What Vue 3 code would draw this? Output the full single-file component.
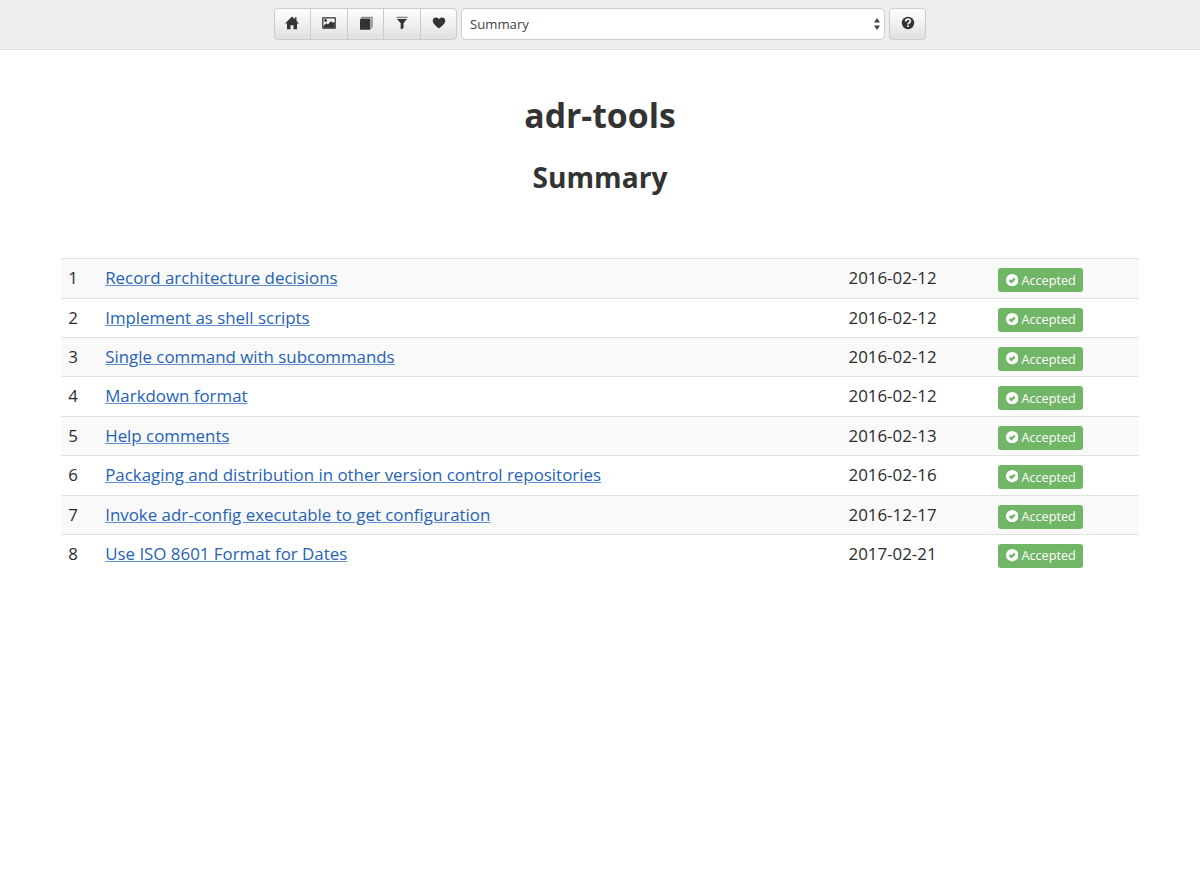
<template>
    <header class="toolbar">
        <div class="btn-group">
            <button v-for="item in buttons" :key="item.title" class="btn" type="button" :title="item.title">
                <svg class="icon" viewBox="0 0 14 14">
                    <path v-for="(shape, i) in item.shapes" :key="i" :d="shape.d" :opacity="shape.opacity" fill-rule="evenodd" />
                </svg>
            </button>
        </div>

        <button class="select" type="button">
            <span>{{ selected }}</span>
            <svg class="arrows" viewBox="0 0 6 12">
                <path d="M3 0 6 4.6H0zM3 12 0 7.4h6z" />
            </svg>
        </button>

        <button class="btn help" type="button" title="Help">
            <svg class="icon" viewBox="0 0 14 14">
                <circle cx="7" cy="7" r="6.2" />
                <path class="question" d="M4.7 5.5C4.7 2.4 9.4 2.5 9.4 5.1 9.4 6.8 7.1 6.8 7.1 8.4M7.1 9.3v1.8" />
            </svg>
        </button>
    </header>

    <main class="content">
        <h1>adr-tools</h1>
        <h2>Summary</h2>

        <div class="decisions">
            <div v-for="row in decisions" :key="row.id" class="row">
                <span>{{ row.id }}</span>
                <span><a href="#" @click.prevent>{{ row.title }}</a></span>
                <span>{{ row.date }}</span>
                <span class="badge">
                    <svg class="check" viewBox="0 0 12 12">
                        <circle cx="6" cy="6" r="6" />
                        <path d="M3.4 5.9 5.3 7.6 8.5 4.5" />
                    </svg>
                    Accepted
                </span>
            </div>
        </div>
    </main>
</template>

<script setup>
import { ref } from "vue";

const selected = ref("Summary");

const buttons = [
    { title: "Home", shapes: [{ d: "M7 .4 9.8 3.2V1.3h1.7v3.6L14 7.5h-2v5.8H8.5V9.2h-3v4.1H2V7.5H0z" }] },
    {
        title: "Diagrams",
        shapes: [
            { d: "M.2 1.2h13.6v11.6H.2zM1.4 2.4v9.2h11.2V2.4z" },
            { d: "M1.5 11.8V10l2.8-2.8 1.6 1.4 3.2-3.5 1.6 1.6 2-.8v5.9z" },
            { d: "M3.6 3.1a1.4 1.4 0 1 1 0 2.8 1.4 1.4 0 0 1 0-2.8z" },
        ],
    },
    {
        title: "Documentation",
        shapes: [
            { d: "M2.4 2.4h8.2c.5 0 .8.3.8.8v10.5H1.8c-.5 0-.8-.3-.8-.8V3.6z" },
            { d: "M1.3 2.7 3.2.7h10.5v10.3l-1.5 1.9V1.9H3.4L2.2 3.2z", opacity: 0.55 },
        ],
    },
    {
        title: "Filter",
        shapes: [
            { d: "M1.5.7h11v1.5h-11z", opacity: 0.55 },
            { d: "M2 3h10L8.5 7.3v4.9L5.7 13.3v-6z" },
        ],
    },
    { title: "Health", shapes: [{ d: "M7 12.5C4.8 10.6.7 7.7.7 4.7.7 1.3 5.1.2 7 3c1.9-2.8 6.3-1.7 6.3 1.7 0 3-4.1 5.9-6.3 7.8z" }] },
];

const decisions = [
    { id: 1, title: "Record architecture decisions", date: "2016-02-12" },
    { id: 2, title: "Implement as shell scripts", date: "2016-02-12" },
    { id: 3, title: "Single command with subcommands", date: "2016-02-12" },
    { id: 4, title: "Markdown format", date: "2016-02-12" },
    { id: 5, title: "Help comments", date: "2016-02-13" },
    { id: 6, title: "Packaging and distribution in other version control repositories", date: "2016-02-16" },
    { id: 7, title: "Invoke adr-config executable to get configuration", date: "2016-12-17" },
    { id: 8, title: "Use ISO 8601 Format for Dates", date: "2017-02-21" },
];
</script>

<style>
body {
    background: #fff;
    color: #2b2b2b;
    font-family: "Open Sans", sans-serif;
}
</style>

<style scoped>
.toolbar {
    display: flex;
    justify-content: center;
    gap: 4px;
    height: 50px;
    padding-top: 8px;
    box-sizing: border-box;
    background: #eee;
    border-bottom: 1px solid #e2e2e2;
}

.btn-group {
    display: flex;
}

.btn {
    display: flex;
    align-items: center;
    justify-content: center;
    width: 37.6px;
    height: 32px;
    padding: 0 0 2px;
    box-sizing: border-box;
    border: 1px solid #ccc;
    border-radius: 4px;
    background: linear-gradient(#fff, #e0e0e0);
}

.btn-group .btn {
    border-radius: 0;
}

.btn-group .btn + .btn {
    margin-left: -1px;
}

.btn-group .btn:first-child {
    border-radius: 4px 0 0 4px;
}

.btn-group .btn:last-child {
    border-radius: 0 4px 4px 0;
}

.icon {
    width: 14px;
    height: 14px;
    fill: #333;
}

.question {
    fill: none;
    stroke: #eee;
    stroke-width: 1.8;
}

.select {
    display: flex;
    align-items: center;
    justify-content: space-between;
    width: 424px;
    height: 32px;
    padding: 0 4px 1px 7.5px;
    box-sizing: border-box;
    border: 1px solid #ccc;
    border-radius: 5px;
    background: #fff;
    color: #444;
    font: 13.15px "Open Sans", sans-serif;
}

.arrows {
    width: 6px;
    height: 12px;
    fill: #444;
}

.help {
    width: 37px;
}

.content {
    padding: 0 61px;
}

h1,
h2 {
    margin: 0;
    color: #333;
    text-align: center;
    font-weight: 700;
}

h1 {
    padding-top: 46px;
    font-size: 33.75px;
    line-height: 38px;
}

h2 {
    padding-top: 27px;
    font-size: 28.1px;
    line-height: 32px;
}

.decisions {
    padding-top: 65.3px;
    font-size: 16.89px;
}

.row {
    display: grid;
    grid-template-columns: 37px 743.3px 150px auto;
    justify-content: start;
    height: 39.38px;
    padding: 7px 0 0 7.2px;
    box-sizing: border-box;
    border-top: 1px solid #e1e1e1;
    line-height: 24px;
}

.row:nth-child(odd) {
    background: #f9f9f9;
}

a {
    color: #2562b3;
    text-decoration: underline;
    text-decoration-color: #5f8fcf;
}

.badge {
    display: flex;
    align-items: center;
    gap: 3px;
    height: 24px;
    margin-top: 2px;
    padding: 0 7.5px 1px;
    box-sizing: border-box;
    border-radius: 3px;
    background: #71b566;
    color: #fff;
    font-size: 12.7px;
    font-weight: 500;
}

.check {
    width: 12.4px;
    height: 12.4px;
    fill: #fff;
}

.check path {
    fill: none;
    stroke: #71b566;
    stroke-width: 2.2;
}
</style>
